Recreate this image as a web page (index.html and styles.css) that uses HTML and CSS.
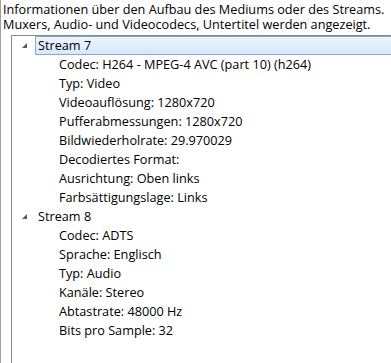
FILE: index.html
```html
<!DOCTYPE html>
<html lang="de">
<head>
    <meta charset="UTF-8">
    <title>Codec-Informationen</title>
    <link rel="stylesheet" href="styles.css">
</head>
<body>
    <div class="panel">
        <p class="intro">Informationen über den Aufbau des Mediums oder des Streams.<br>Muxers, Audio- und Videocodecs, Untertitel werden angezeigt.</p>

        <div class="tree">
            <div class="node">
                <div class="row stream selected">
                    <svg class="expander" width="6" height="6" viewBox="0 0 6 6"><polygon points="5,0 5,5 0,5"/></svg>
                    <span class="label">Stream 7</span>
                </div>
                <div class="row item">Codec: H264 - MPEG-4 AVC (part 10) (h264)</div>
                <div class="row item">Typ: Video</div>
                <div class="row item">Videoauflösung: 1280x720</div>
                <div class="row item">Pufferabmessungen: 1280x720</div>
                <div class="row item">Bildwiederholrate: 29.970029</div>
                <div class="row item">Decodiertes Format:</div>
                <div class="row item">Ausrichtung: Oben links</div>
                <div class="row item">Farbsättigungslage: Links</div>
            </div>
            <div class="node">
                <div class="row stream">
                    <svg class="expander" width="6" height="6" viewBox="0 0 6 6"><polygon points="5,0 5,5 0,5"/></svg>
                    <span class="label">Stream 8</span>
                </div>
                <div class="row item">Codec: ADTS</div>
                <div class="row item">Sprache: Englisch</div>
                <div class="row item">Typ: Audio</div>
                <div class="row item">Kanäle: Stereo</div>
                <div class="row item">Abtastrate: 48000 Hz</div>
                <div class="row item">Bits pro Sample: 32</div>
            </div>
        </div>
    </div>
</body>
</html>
```

FILE: styles.css
```css
html, body {
    margin: 0;
    padding: 0;
    width: 100%;
    height: 100%;
    overflow: hidden;
    background: #fff;
    font-family: "Open Sans", "Noto Sans", sans-serif;
    font-size: 12.7px;
    color: #000;
}
.panel {
    height: 100%;
    border-left: 1px solid #a0a0a0;
    box-sizing: border-box;
}
.intro {
    margin: 0;
    padding: 2px 0 0 2px;
    line-height: 15px;
}
.tree {
    margin: 3px 0 0 10px;
    height: 330px;
    border-top: 1px solid #828790;
    border-left: 1px solid #828790;
}
.row {
    height: 19px;
    line-height: 19px;
    white-space: nowrap;
}
.stream {
    display: flex;
    align-items: center;
    padding-left: 10px;
}
.expander {
    fill: #595959;
    margin-right: 7px;
}
.label {
    padding-left: 2px;
    height: 19px;
    line-height: 17px;
    box-sizing: border-box;
    border: 1px solid transparent;
}
.selected .label {
    flex: 1;
    border-color: #84a7d1;
    border-right: none;
    border-radius: 2px 0 0 2px;
    background: linear-gradient(#eef5fd, #d6e8fc);
}
.item {
    padding-left: 47px;
}
```
